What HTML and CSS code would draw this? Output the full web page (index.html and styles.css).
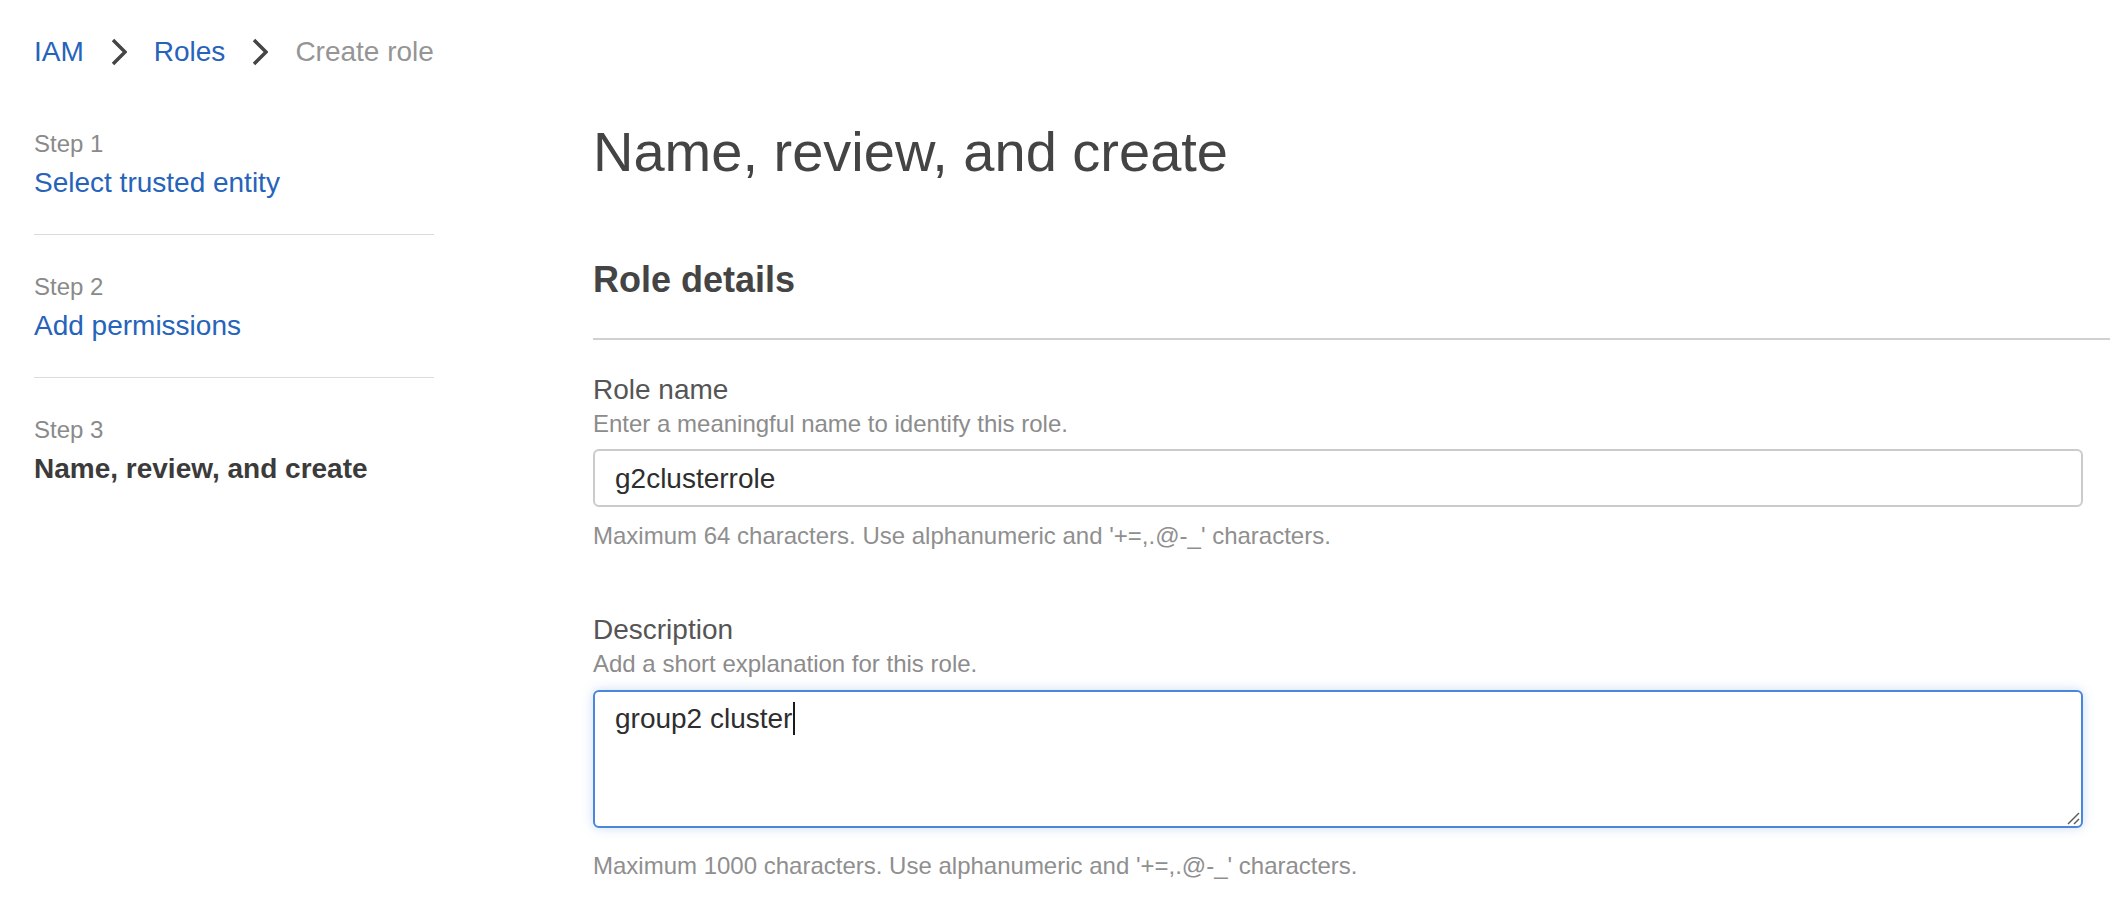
FILE: index.html
```html
<!DOCTYPE html>
<html lang="en">
<head>
<meta charset="utf-8">
<title>Create role</title>
<link rel="stylesheet" href="styles.css">
</head>
<body>
<nav class="breadcrumb">
  <a class="crumb-link" href="#">IAM</a>
  <svg class="chevron" width="16" height="28" viewBox="0 0 16 28"><polyline points="2,2 14,14 2,26" fill="none" stroke="#454545" stroke-width="3.4"/></svg>
  <a class="crumb-link" href="#">Roles</a>
  <svg class="chevron" width="16" height="28" viewBox="0 0 16 28"><polyline points="2,2 14,14 2,26" fill="none" stroke="#454545" stroke-width="3.4"/></svg>
  <span class="crumb-current">Create role</span>
</nav>

<div class="layout">
  <ol class="steps">
    <li class="step">
      <div class="step-num">Step 1</div>
      <a class="step-title" href="#">Select trusted entity</a>
    </li>
    <li class="step">
      <div class="step-num">Step 2</div>
      <a class="step-title" href="#">Add permissions</a>
    </li>
    <li class="step">
      <div class="step-num">Step 3</div>
      <div class="step-title step-active">Name, review, and create</div>
    </li>
  </ol>

  <main class="main">
    <h1 class="page-title">Name, review, and create</h1>
    <div class="section-header">
      <h2 class="section-title">Role details</h2>
    </div>
    <div class="form">
      <div class="field">
        <label class="field-label" for="role-name">Role name</label>
        <div class="field-desc">Enter a meaningful name to identify this role.</div>
        <input class="text-input" id="role-name" type="text" value="g2clusterrole">
        <div class="field-hint">Maximum 64 characters. Use alphanumeric and '+=,.@-_' characters.</div>
      </div>
      <div class="field field-second">
        <div class="field-label">Description</div>
        <div class="field-desc">Add a short explanation for this role.</div>
        <div class="textarea"><span>group2 cluster</span><span class="caret"></span>
          <svg class="grip" width="15" height="15" viewBox="0 0 15 15"><line x1="14" y1="3" x2="3" y2="14" stroke="#5a5a5a" stroke-width="1.4"/><line x1="14" y1="9" x2="9" y2="14" stroke="#5a5a5a" stroke-width="1.4"/></svg>
        </div>
        <div class="field-hint field-hint-area">Maximum 1000 characters. Use alphanumeric and '+=,.@-_' characters.</div>
      </div>
    </div>
  </main>
</div>
</body>
</html>
```

FILE: styles.css
```css
html, body {
  margin: 0;
  background: #ffffff;
}

body {
  padding: 32px 0 0 34px;
  font-family: "Liberation Sans", Arial, Helvetica, sans-serif;
  color: #444444;
  overflow: hidden;
  width: 2076px;
  height: 892px;
}

a {
  text-decoration: none;
}

.breadcrumb {
  display: flex;
  align-items: center;
  gap: 27px;
  height: 40px;
  font-size: 28px;
  line-height: 40px;
}

.crumb-link {
  color: #2663ba;
}

.crumb-current {
  color: #959595;
}

.chevron {
  display: block;
}

.layout {
  display: grid;
  grid-template-columns: 400px 1fr;
  column-gap: 159px;
  margin-top: 20px;
}

.steps {
  list-style: none;
  margin: 0;
  padding: 0;
}

.step {
  padding: 36px 0 29px;
  border-bottom: 1px solid #dcdcdc;
}

.step:last-child {
  border-bottom: none;
}

.step-num {
  font-size: 24px;
  line-height: 32px;
  color: #8a8a8a;
}

.step-title {
  display: block;
  font-size: 28px;
  line-height: 45px;
  color: #2663ba;
}

.step-active {
  font-weight: bold;
  color: #3b3b3b;
}

.main {
  min-width: 0;
}

.page-title {
  margin: 28px 0 0;
  font-size: 56px;
  line-height: 64px;
  font-weight: normal;
  color: #444444;
}

.section-header {
  margin-top: 74px;
  padding-bottom: 36px;
  border-bottom: 2px solid #d0d0d0;
}

.section-title {
  margin: 0;
  font-size: 36px;
  line-height: 44px;
  font-weight: bold;
  color: #444444;
}

.form {
  margin-right: 27px;
  padding-top: 32px;
}

.field-second {
  margin-top: 60px;
}

.field-label {
  display: block;
  font-size: 28px;
  line-height: 36px;
  color: #555555;
}

.field-desc {
  font-size: 24px;
  line-height: 32px;
  color: #8c8c8c;
}

.text-input {
  display: block;
  box-sizing: border-box;
  width: 100%;
  height: 58px;
  margin-top: 9px;
  padding: 2px 20px 0;
  border: 2px solid #cbcbcb;
  border-radius: 6px;
  font-family: "Liberation Sans", Arial, Helvetica, sans-serif;
  font-size: 28px;
  color: #2e2e2e;
  background: #ffffff;
  outline: none;
}

.field-hint {
  margin-top: 13px;
  font-size: 24px;
  line-height: 32px;
  color: #8f8f8f;
}

.field-hint-area {
  margin-top: 22px;
}

.textarea {
  position: relative;
  box-sizing: border-box;
  height: 138px;
  margin-top: 10px;
  padding: 10px 20px;
  border: 2px solid #4a87da;
  border-radius: 6px;
  box-shadow: 0 0 12px rgba(74, 135, 218, 0.28);
  font-size: 28px;
  line-height: 34px;
  color: #2e2e2e;
  background: #ffffff;
}

.caret {
  display: inline-block;
  width: 2px;
  height: 33px;
  margin-left: 1px;
  vertical-align: top;
  background: #1a1a1a;
}

.grip {
  position: absolute;
  right: 1px;
  bottom: 1px;
}
```
